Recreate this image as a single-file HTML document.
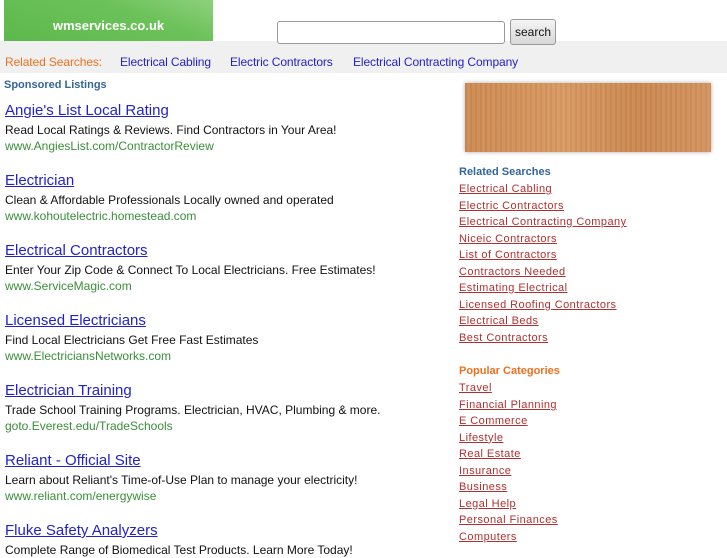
<!DOCTYPE html>
<html><head><meta charset="utf-8"><style>
*{margin:0;padding:0;box-sizing:border-box}
body{width:727px;height:545px;overflow:hidden;background:#fff;font-family:"Liberation Sans",sans-serif;position:relative}
.logo{position:absolute;left:4px;top:0;width:209px;height:41px;background:linear-gradient(200deg,#8fd07c 0%,#6cc25a 35%,#5db84b 100%);color:#fff;font-weight:bold;font-size:13px;text-align:center;line-height:52px}
.inp{position:absolute;left:277px;top:21px;width:228px;height:23px;border:1px solid #999;border-radius:3px;background:#fff}
.btn{position:absolute;left:510px;top:19px;width:46px;height:26px;border:1px solid #999;border-radius:3px;background:linear-gradient(#f4f4f4,#d8d8d8);font-size:12px;text-align:center;line-height:25px;color:#111}
.bar{position:absolute;left:0;top:41px;width:727px;height:32px;background:#f0f0f0;font-size:12px;line-height:42px;letter-spacing:-0.1px}
.bar span{position:absolute;top:0}
.sp{position:absolute;left:4px;top:79px;font-size:11px;font-weight:bold;color:#336699}
.ad{position:absolute;left:5px}
.ad a{display:block;color:#2222cc;font-size:15px;text-decoration:underline;line-height:18px}
.ad p{font-size:12px;color:#111;line-height:16px;margin-top:2px}
.ad .u{color:#3a8f3a;margin-top:0}
.wood{position:absolute;left:465px;top:83px;width:246px;height:69px;box-shadow:0 0 4px #aaa;background:repeating-linear-gradient(90deg,rgba(0,0,0,.04) 0 2px,rgba(255,255,255,.03) 2px 5px),linear-gradient(90deg,#cf8a52,#d99a62 40%,#cc8850 70%,#d49460)}
.rh{position:absolute;left:459px;font-size:11px;font-weight:bold}
.rl{position:absolute;left:459px;font-size:11px;line-height:16.5px;letter-spacing:0.45px}
.rl a{display:block;color:#b03030;text-decoration:underline}
</style></head><body>
<div class="logo">wmservices.co.uk</div>
<div class="bar"><span style="left:5px;color:#f07020">Related Searches:</span><span style="left:120px;color:#2222cc">Electrical Cabling</span><span style="left:230px;color:#2222cc">Electric Contractors</span><span style="left:353px;color:#2222cc">Electrical Contracting Company</span></div>
<div class="inp"></div><div class="btn">search</div>
<div class="sp">Sponsored Listings</div>
<div class="ad" style="top:102px"><a>Angie's List Local Rating</a><p>Read Local Ratings &amp; Reviews. Find Contractors in Your Area!</p><p class="u">www.AngiesList.com/ContractorReview</p></div>
<div class="ad" style="top:172px"><a>Electrician</a><p>Clean &amp; Affordable Professionals Locally owned and operated</p><p class="u">www.kohoutelectric.homestead.com</p></div>
<div class="ad" style="top:242px"><a>Electrical Contractors</a><p>Enter Your Zip Code &amp; Connect To Local Electricians. Free Estimates!</p><p class="u">www.ServiceMagic.com</p></div>
<div class="ad" style="top:312px"><a>Licensed Electricians</a><p>Find Local Electricians Get Free Fast Estimates</p><p class="u">www.ElectriciansNetworks.com</p></div>
<div class="ad" style="top:382px"><a>Electrician Training</a><p>Trade School Training Programs. Electrician, HVAC, Plumbing &amp; more.</p><p class="u">goto.Everest.edu/TradeSchools</p></div>
<div class="ad" style="top:452px"><a>Reliant - Official Site</a><p>Learn about Reliant's Time-of-Use Plan to manage your electricity!</p><p class="u">www.reliant.com/energywise</p></div>
<div class="ad" style="top:522px"><a>Fluke Safety Analyzers</a><p>Complete Range of Biomedical Test Products. Learn More Today!</p></div>
<div class="wood"></div>
<div class="rh" style="top:166px;color:#336699">Related Searches</div>
<div class="rl" style="top:181px"><a>Electrical Cabling</a><a>Electric Contractors</a><a>Electrical Contracting Company</a><a>Niceic Contractors</a><a>List of Contractors</a><a>Contractors Needed</a><a>Estimating Electrical</a><a>Licensed Roofing Contractors</a><a>Electrical Beds</a><a>Best Contractors</a></div>
<div class="rh" style="top:365px;color:#f07020">Popular Categories</div>
<div class="rl" style="top:380px"><a>Travel</a><a>Financial Planning</a><a>E Commerce</a><a>Lifestyle</a><a>Real Estate</a><a>Insurance</a><a>Business</a><a>Legal Help</a><a>Personal Finances</a><a>Computers</a></div>
</body></html>
